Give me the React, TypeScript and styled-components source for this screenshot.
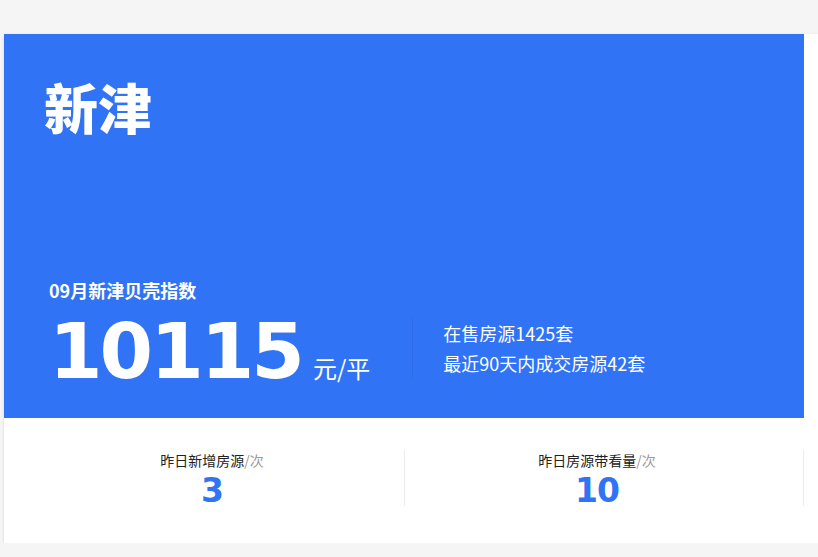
import React from "react"
import styled, { createGlobalStyle } from "styled-components"

const GlobalStyle = createGlobalStyle`
  html, body {
    margin: 0;
    padding: 0;
    overflow: hidden;
    background: #f5f5f5;
    font-family: "Noto Sans CJK SC", "Noto Sans", sans-serif;
  }
`

const BLUE = "#3173f5"

const Page = styled.div`
  padding: 34px 0 0 4px;
`

const Card = styled.div`
  width: 840px;
  background: #fff;
  box-shadow: 0 1px 3px rgba(0, 0, 0, 0.12);
`

const Slide = styled.div`
  width: 800px;
`

const Banner = styled.div`
  height: 384px;
  background: ${BLUE};
  color: #fff;
  box-sizing: border-box;
  padding: 46px 0 28px 40px;
  display: flex;
  flex-direction: column;
  justify-content: space-between;
`

const Title = styled.h1`
  margin: 0;
  font-size: 54px;
  line-height: 1;
  font-weight: 900;
`

const IndexBlock = styled.div`
  padding-left: 5px;
`

const IndexLabel = styled.div`
  font-size: 18px;
  line-height: 24px;
  font-weight: 700;
  margin-bottom: 11px;
`

const IndexRow = styled.div`
  display: flex;
  align-items: center;
`

const PriceGroup = styled.div`
  display: flex;
  align-items: baseline;
`

const Price = styled.span`
  font-family: "DejaVu Sans", sans-serif;
  font-size: 77px;
  line-height: 1;
  font-weight: 700;
  letter-spacing: -3px;
`

const Unit = styled.span`
  font-size: 24px;
  margin-left: 11px;
`

const Info = styled.div`
  margin-left: 42px;
  margin-bottom: 8px;
  padding-left: 30px;
  border-left: 1px solid rgba(0, 0, 0, 0.06);
  font-size: 18px;
  line-height: 30px;
`

const Stats = styled.div`
  display: flex;
  padding: 32px 0 37px;
`

const Stat = styled.div<{ $padL: number; $padR: number }>`
  flex: 1;
  text-align: center;
  border-right: 1px solid #ececec;
  height: 56px;
  padding: 0 ${(p) => p.$padR}px 0 ${(p) => p.$padL}px;
`

const StatLabel = styled.div`
  font-size: 14px;
  line-height: 20px;
  color: #222;
  span {
    color: #999;
  }
`

const StatValue = styled.div`
  font-family: "DejaVu Sans", sans-serif;
  font-size: 33px;
  line-height: 38px;
  margin-top: 2px;
  font-weight: 700;
  letter-spacing: -1px;
  color: ${BLUE};
`

const stats = [
  { label: "昨日新增房源", value: 3, padL: 16, padR: 0 },
  { label: "昨日房源带看量", value: 10, padL: 0, padR: 14 },
]

export default function App() {
  return (
    <>
      <GlobalStyle />
      <Page>
        <Card>
          <Slide>
            <Banner>
              <Title>新津</Title>
              <IndexBlock>
                <IndexLabel>09月新津贝壳指数</IndexLabel>
                <IndexRow>
                  <PriceGroup>
                    <Price>10115</Price>
                    <Unit>元/平</Unit>
                  </PriceGroup>
                  <Info>
                    <div>在售房源1425套</div>
                    <div>最近90天内成交房源42套</div>
                  </Info>
                </IndexRow>
              </IndexBlock>
            </Banner>
            <Stats>
              {stats.map((s) => (
                <Stat key={s.label} $padL={s.padL} $padR={s.padR}>
                  <StatLabel>
                    {s.label}
                    <span>/次</span>
                  </StatLabel>
                  <StatValue>{s.value}</StatValue>
                </Stat>
              ))}
            </Stats>
          </Slide>
        </Card>
      </Page>
    </>
  )
}
